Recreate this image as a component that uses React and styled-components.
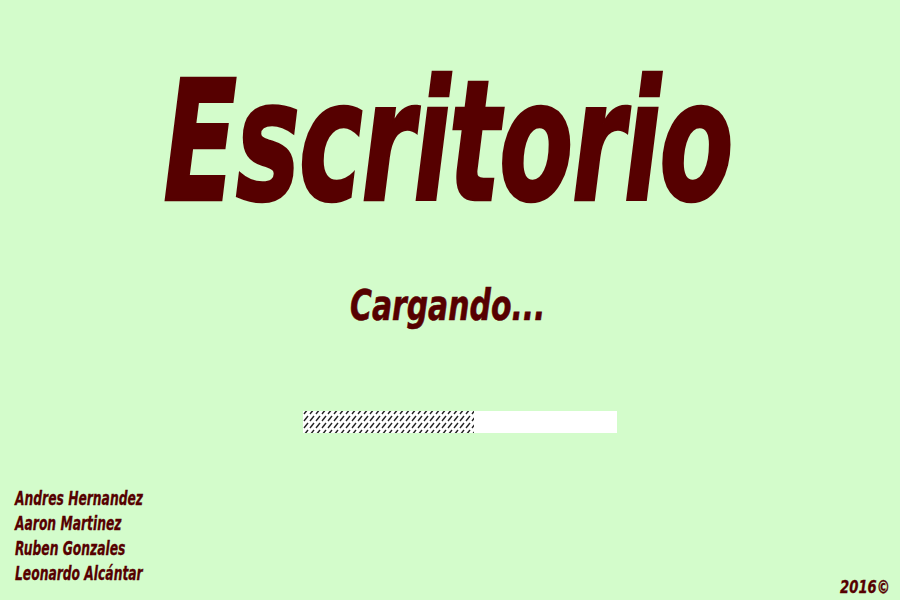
import React from 'react';
import styled, { createGlobalStyle } from 'styled-components';

const GlobalStyle = createGlobalStyle`
    html, body {
        margin: 0;
        padding: 0;
        background: #d3fccb;
    }
`;

const Page = styled.div`
    height: 100vh;
    display: flex;
    flex-direction: column;
    align-items: center;
    box-sizing: border-box;
    padding: 58px 10px 3px 15px;
    font-family: "DejaVu Sans Condensed", "DejaVu Sans", "Liberation Sans", sans-serif;
    font-weight: 700;
    font-style: italic;
    color: #560000;
`;

// the reference face is a narrow condensed sans; squeeze DejaVu Condensed to match
const Narrow = styled.span`
    display: inline-block;
    white-space: nowrap;
    transform-origin: ${({ $origin }) => $origin || 'center'};
    transform: ${({ $shift }) => ($shift ? `translateX(${$shift}px)` : '')} scaleX(${({ $scale }) => $scale});
    -webkit-text-stroke: ${({ $stroke }) => $stroke || 0}px currentColor;
`;

const Title = styled.h1`
    margin: 0;
    font-size: 168px;
    line-height: 1;
    font-weight: 700;
    letter-spacing: -2px;
`;

const Status = styled.div`
    margin-top: 59px;
    font-size: 42px;
    line-height: 1;
`;

const Track = styled.div`
    margin-top: 84px;
    width: 314px;
    height: 22px;
    background: #ffffff;
    transform: translateX(7px);
    display: flex;
`;

const Fill = styled.div`
    height: 100%;
    overflow: hidden;
`;

const Footer = styled.footer`
    margin-top: auto;
    align-self: stretch;
    display: flex;
    justify-content: space-between;
    align-items: flex-end;
`;

const Credits = styled.ul`
    list-style: none;
    margin: 0 0 11px;
    padding: 0;
`;

const Credit = styled.li`
    font-size: 19px;
    line-height: 25px;
`;

const Year = styled.span`
    font-size: 17px;
    line-height: 20px;
`;

const Hatch = () => (
    <svg width="100%" height="100%">
        <defs>
            <pattern id="hatch" width="6" height="7" y="-3" patternUnits="userSpaceOnUse">
                <line x1="1" y1="6" x2="5" y2="1" stroke="#222" strokeWidth="1.4" />
            </pattern>
        </defs>
        <rect width="100%" height="100%" fill="#fff" />
        <rect width="100%" height="100%" fill="url(#hatch)" />
    </svg>
);

const names = ['Andres Hernandez', 'Aaron Martinez', 'Ruben Gonzales', 'Leonardo Alcántar'];

export default function App() {
    const progress = 0.545;
    return (
        <>
            <GlobalStyle />
            <Page>
                <Title>
                    <Narrow $scale={0.715} $shift={-5} $stroke={2.5}>Escritorio</Narrow>
                </Title>
                <Status>
                    <Narrow $scale={0.79} $shift={-5} $stroke={0.6}>Cargando...</Narrow>
                </Status>
                <Track>
                    <Fill style={{ width: `${progress * 100}%` }}>
                        <Hatch />
                    </Fill>
                </Track>
                <Footer>
                    <Credits>
                        {names.map((n) => (
                            <Credit key={n}>
                                <Narrow $scale={0.72} $origin="left" $stroke={0.3}>{n}</Narrow>
                            </Credit>
                        ))}
                    </Credits>
                    <Year>
                        <Narrow $scale={0.86} $origin="right" $stroke={0.3}>2016©</Narrow>
                    </Year>
                </Footer>
            </Page>
        </>
    );
}
